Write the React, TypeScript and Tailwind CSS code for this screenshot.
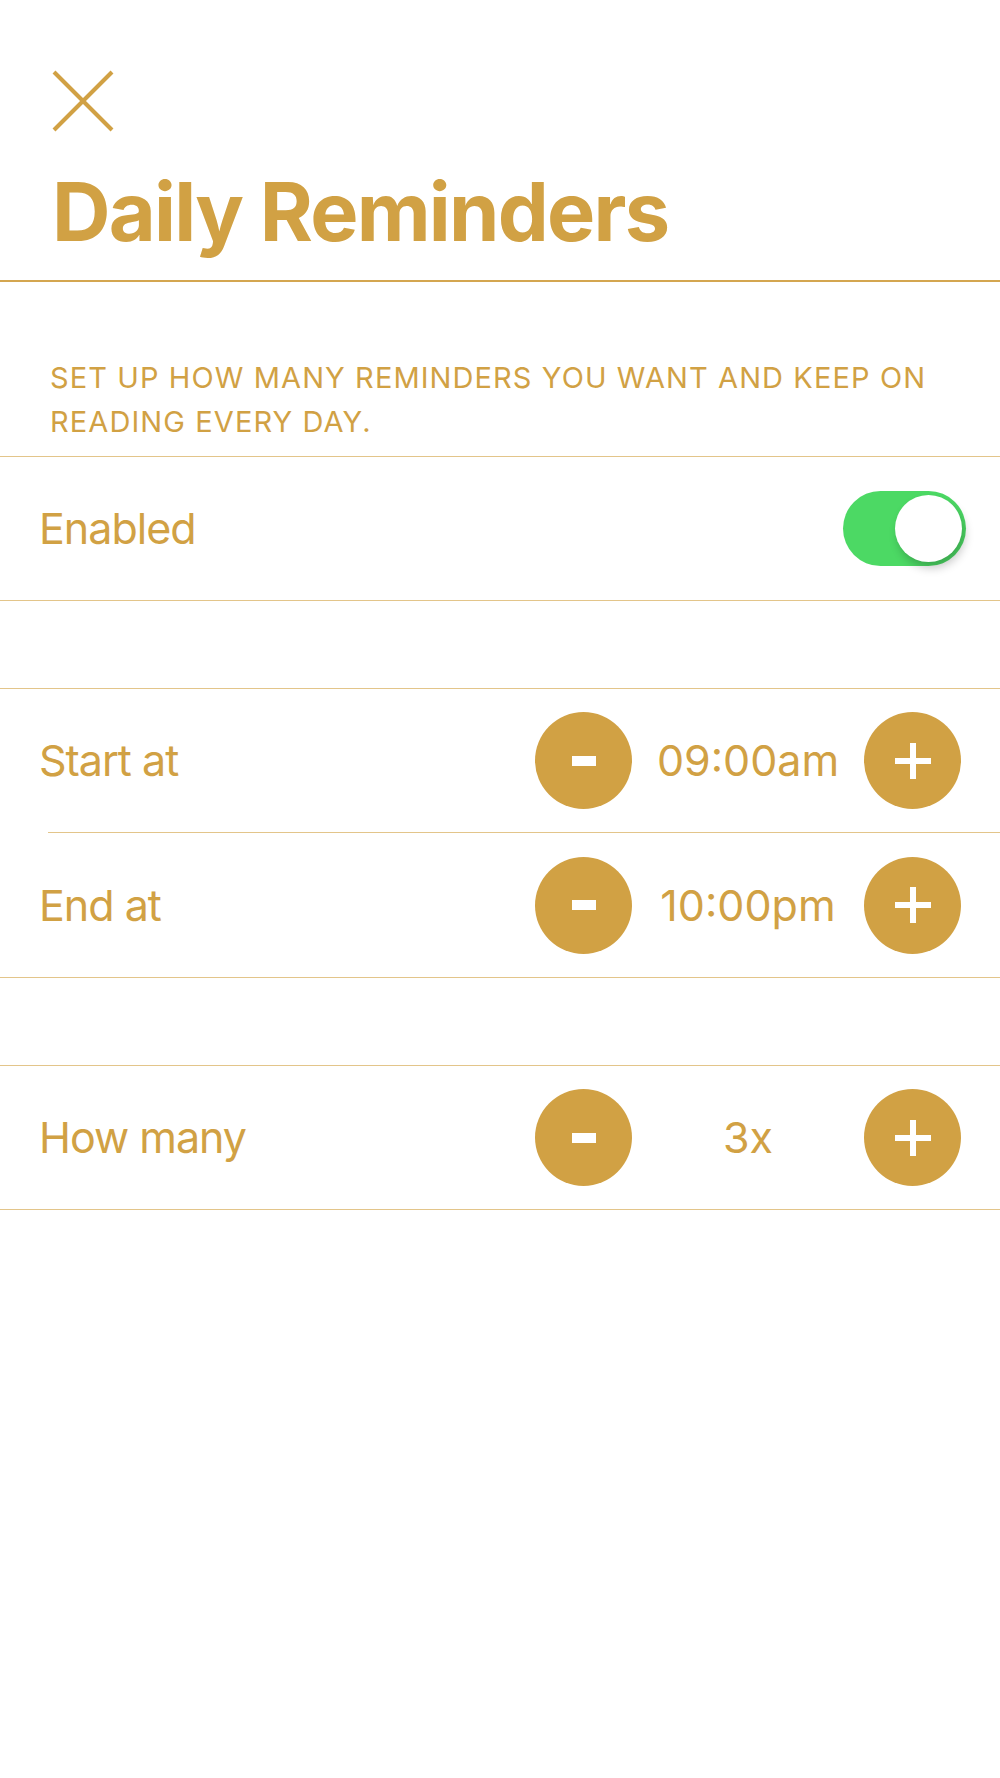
import React, { useState } from "react";

const gold = "text-[#D1A144]";

function Stepper({ value, onMinus, onPlus }: { value: string; onMinus: () => void; onPlus: () => void }) {
  return (
    <div className="flex items-center">
      <button
        onClick={onMinus}
        className="w-[97px] h-[97px] rounded-full bg-[#D1A144] flex items-center justify-center"
      >
        <span className="block w-[24px] h-[10px] bg-white" />
      </button>
      <div className={`w-[232px] text-center text-[43px] leading-none ${gold}`}>{value}</div>
      <button
        onClick={onPlus}
        className="w-[97px] h-[97px] rounded-full bg-[#D1A144] flex items-center justify-center relative"
      >
        <span className="absolute w-[36px] h-[6px] bg-white" />
        <span className="absolute w-[6px] h-[36px] bg-white" />
      </button>
    </div>
  );
}

function fmt(mins: number) {
  const h24 = Math.floor(mins / 60) % 24;
  const m = mins % 60;
  const ampm = h24 < 12 ? "am" : "pm";
  let h = h24 % 12;
  if (h === 0) h = 12;
  return `${String(h).padStart(2, "0")}:${String(m).padStart(2, "0")}${ampm}`;
}

export default function App() {
  const [enabled, setEnabled] = useState(true);
  const [start, setStart] = useState(9 * 60);
  const [end, setEnd] = useState(22 * 60);
  const [count, setCount] = useState(3);

  return (
    <div className="min-h-screen w-full bg-white font-['Inter',sans-serif]">
      {/* Header */}
      <div className="pt-[70px] pl-[52px] pr-[40px] pb-[27px] border-b-2 border-[#D4A650]">
        <svg width="62" height="62" viewBox="0 0 62 62" className="block">
          <line x1="2" y1="2" x2="60" y2="60" stroke="#D1A144" strokeWidth="4" />
          <line x1="60" y1="2" x2="2" y2="60" stroke="#D1A144" strokeWidth="4" />
        </svg>
        <h1 className={`mt-[40px] text-[81px] leading-none font-bold tracking-[-1.75px] ${gold}`}>Daily Reminders</h1>
      </div>

      {/* Description */}
      <div className="pt-[74px] pb-[12px] px-[50px]">
        <p className={`text-[29px] leading-[44px] uppercase tracking-[1.1px] ${gold}`}>
          Set up how many reminders you want and keep on
          <br />
          reading every day.
        </p>
      </div>

      {/* Enabled */}
      <div className="h-[145px] border-y border-[#E3C58A] flex items-center justify-between pl-[39px] pr-[34px]">
        <span className={`text-[43px] tracking-[-1px] ${gold}`}>Enabled</span>
        <button
          onClick={() => setEnabled(!enabled)}
          className={`relative w-[123px] h-[75px] rounded-full transition-colors ${enabled ? "bg-[#4CD964]" : "bg-[#E5E5EA]"}`}
        >
          <span
            className={`absolute top-[4px] w-[67px] h-[67px] rounded-full bg-white shadow-[3px_6px_10px_rgba(0,0,0,0.22)] ${enabled ? "right-[4px]" : "left-[4px]"}`}
          />
        </button>
      </div>

      <div className="h-[87px]" />

      {/* Times */}
      <div className="border-y border-[#E3C58A]">
        <div className="h-[143px] flex items-center justify-between pl-[39px] pr-[39px]">
          <span className={`text-[43px] tracking-[-1px] ${gold}`}>Start at</span>
          <Stepper value={fmt(start)} onMinus={() => setStart((s) => (s + 1440 - 30) % 1440)} onPlus={() => setStart((s) => (s + 30) % 1440)} />
        </div>
        <div className="ml-[48px] border-t border-[#E3C58A]" />
        <div className="h-[144px] flex items-center justify-between pl-[39px] pr-[39px]">
          <span className={`text-[43px] tracking-[-1px] ${gold}`}>End at</span>
          <Stepper value={fmt(end)} onMinus={() => setEnd((s) => (s + 1440 - 30) % 1440)} onPlus={() => setEnd((s) => (s + 30) % 1440)} />
        </div>
      </div>

      <div className="h-[87px]" />

      {/* How many */}
      <div className="h-[145px] border-y border-[#E3C58A] flex items-center justify-between pl-[39px] pr-[39px]">
        <span className={`text-[43px] tracking-[-1px] ${gold}`}>How many</span>
        <Stepper value={`${count}x`} onMinus={() => setCount((c) => Math.max(1, c - 1))} onPlus={() => setCount((c) => c + 1)} />
      </div>
    </div>
  );
}
